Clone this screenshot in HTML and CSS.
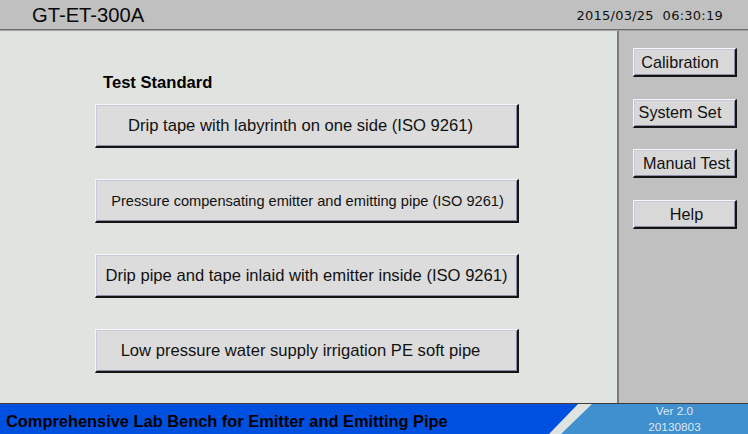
FILE: index.html
```html
<!DOCTYPE html>
<html>
<head>
<meta charset="utf-8">
<link rel="stylesheet" href="styles.css">
</head>
<body>
<div class="screen">
  <header class="topbar">
    <div class="title">GT-ET-300A</div>
    <div class="clock">2015/03/25&nbsp;&nbsp;06:30:19</div>
  </header>
  <div class="body">
    <main class="main">
      <div class="section-title">Test Standard</div>
      <div class="std-list">
        <button class="std-btn shift-l">Drip tape with labyrinth on one side (ISO 9261)</button>
        <button class="std-btn small">Pressure compensating emitter and emitting pipe (ISO 9261)</button>
        <button class="std-btn">Drip pipe and tape inlaid with emitter inside (ISO 9261)</button>
        <button class="std-btn shift-l">Low pressure water supply irrigation PE soft pipe</button>
      </div>
    </main>
    <aside class="side">
      <button class="side-btn shift-l">Calibration</button>
      <button class="side-btn shift-l">System Set</button>
      <button class="side-btn shift-r">Manual Test</button>
      <button class="side-btn shift-r">Help</button>
    </aside>
  </div>
  <footer class="footer">
    <div class="foot-left">Comprehensive Lab Bench for Emitter and Emitting Pipe</div>
    <div class="foot-right">
      <span>Ver 2.0</span>
      <span>20130803</span>
    </div>
  </footer>
</div>
</body>
</html>
```

FILE: styles.css
```css
html, body {
  margin: 0;
  padding: 0;
}
body {
  width: 748px;
  height: 434px;
  overflow: hidden;
  font-family: "Liberation Sans", Arial, sans-serif;
  color: #000;
}
.screen {
  width: 748px;
  height: 434px;
  display: flex;
  flex-direction: column;
}
.topbar {
  height: 29px;
  background: #c0c0c0;
  border-bottom: 1px solid #6c6c6c;
  box-shadow: 0 1px 0 #a4a4a4;
  position: relative;
  z-index: 1;
  display: flex;
  align-items: center;
  justify-content: space-between;
  box-sizing: content-box;
}
.title {
  font-size: 20.2px;
  margin-left: 32px;
  margin-top: 1px;
  color: #0a0a0a;
}
.clock {
  font-family: "DejaVu Sans", Verdana, sans-serif;
  font-size: 13px;
  margin-right: 25px;
  margin-top: 2px;
  letter-spacing: 0.25px;
  color: #111;
}
.body {
  flex: 1;
  display: flex;
  min-height: 0;
}
.main {
  width: 617px;
  background: #e0e4e0;
  padding: 44px 0 0 95px;
  box-sizing: border-box;
}
.section-title {
  font-weight: bold;
  font-size: 16.6px;
  margin-left: 8px;
  line-height: 18px;
}
.std-list {
  margin-top: 12px;
  display: flex;
  flex-direction: column;
  gap: 31px;
}
.std-btn {
  width: 424px;
  height: 44px;
  box-sizing: border-box;
  background: #dcdcdc;
  border-style: solid;
  border-width: 1px 2px 2px 1px;
  border-color: #f6f6f6 #141414 #141414 #f6f6f6;
  box-shadow: inset 1px 1px 0 #c8c8dc, inset -1px -1px 0 #8c8ca4;
  font-family: "Liberation Sans", Arial, sans-serif;
  font-size: 16.6px;
  color: #111;
  padding: 0;
  text-align: center;
}
.std-btn.shift-l {
  padding-right: 12px;
}
.std-btn.small {
  font-size: 14.6px;
  padding-left: 2px;
}
.side {
  flex: 1;
  background: #c0c0c0;
  border-left: 2px solid #7c7c7c;
  padding: 18px 0 0 14px;
  display: flex;
  flex-direction: column;
  align-items: flex-start;
  gap: 21.7px;
}
.side-btn {
  width: 104px;
  height: 29px;
  box-sizing: border-box;
  background: #d8d8d8;
  border-style: solid;
  border-width: 1px 2px 2px 1px;
  border-color: #f6f6f6 #141414 #141414 #f6f6f6;
  box-shadow: inset 1px 1px 0 #c8c8dc, inset -1px -1px 0 #8c8ca4;
  font-family: "Liberation Sans", Arial, sans-serif;
  font-size: 16.2px;
  color: #111;
  padding: 0;
  text-align: center;
}
.side-btn.shift-l {
  padding-right: 9px;
}
.side-btn.shift-r {
  padding-left: 4px;
}
.footer {
  height: 31px;
  box-sizing: border-box;
  background: #e0e4e0;
  border-top: 1px solid #3c3c3c;
  display: flex;
}
.foot-left {
  width: 578px;
  flex: none;
  background: #0050e0;
  clip-path: polygon(0 0, 100% 0, calc(100% - 29px) 100%, 0 100%);
  font-weight: bold;
  font-size: 16.4px;
  line-height: 30px;
  padding: 2px 0 0 6px;
  box-sizing: border-box;
  color: #000;
  white-space: nowrap;
}
.foot-right {
  flex: 1;
  margin-left: -17px;
  background: #4090d0;
  clip-path: polygon(31px 0, 100% 0, 100% 100%, 0 100%);
  display: flex;
  flex-direction: column;
  align-items: center;
  justify-content: center;
  padding-left: 40px;
  font-size: 11.8px;
  line-height: 16px;
  color: #dce8f2;
}
```
